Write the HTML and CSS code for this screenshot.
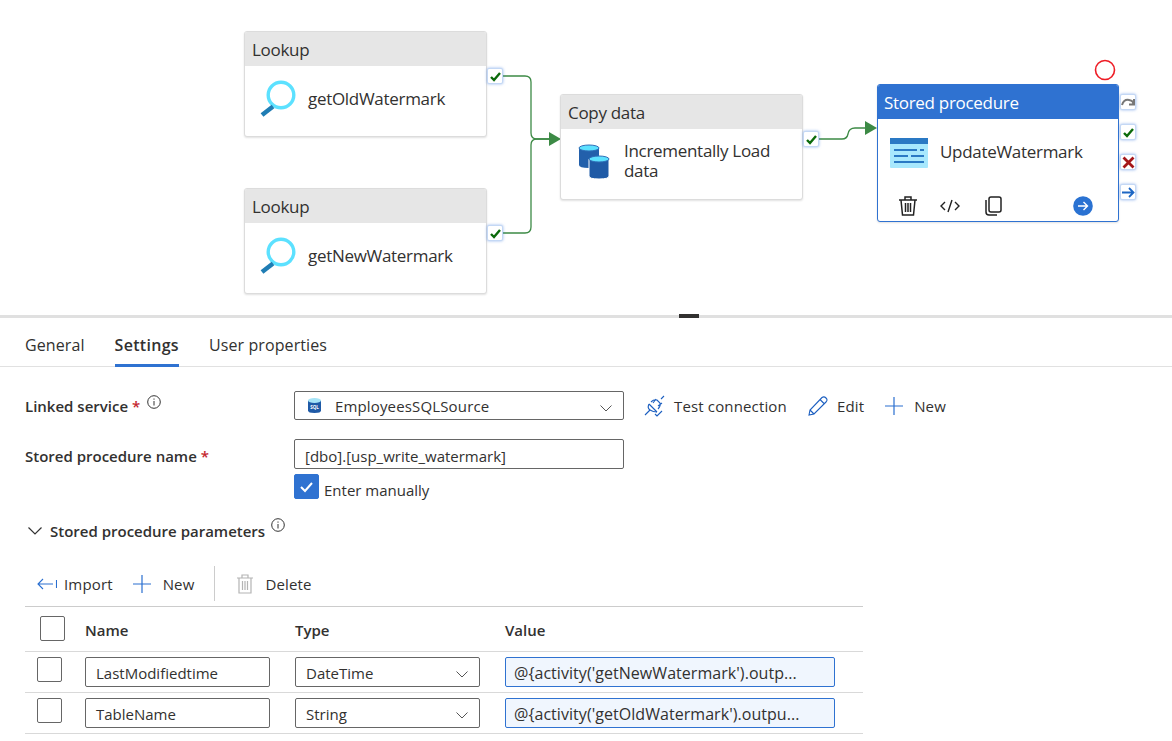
FILE: index.html
```html
<!DOCTYPE html>
<html lang="en">
<head>
	<meta charset="UTF-8">
	<title>Stored procedure settings</title>
	<link rel="stylesheet" href="styles.css">
</head>
<body>
	<!-- pipeline canvas -->
	<div class="canvas">
		<svg class="wires" width="1172" height="315" viewBox="0 0 1172 315">
			<path class="wire" d="M503 76H525q6 0 6 6V133q0 6 6 6H551"/>
			<path class="wire" d="M503 233H525q6 0 6-6V145q0-6 6-6H551"/>
			<path class="wire" d="M819 139H842q5 0 6-5q1-6 7-6H867"/>
			<path class="head" d="M549 132L561 139L549 146Z"/>
			<path class="head" d="M865 121L877 128L865 135Z"/>
			<circle class="ring" cx="1105" cy="70" r="9.5"/>
		</svg>

		<div class="node lookup1">
			<div class="node-head">Lookup</div>
			<div class="node-body">
				<svg class="node-icon" width="40" height="40" viewBox="0 0 40 40"><circle cx="21" cy="16" r="12.8" fill="none" stroke="#5ce1ff" stroke-width="3.4"/><path d="M2 36L13 27.500" stroke="#1f7db4" stroke-width="4.500"/></svg>
				<span>getOldWatermark</span>
			</div>
		</div>
		<div class="tick t1"><svg width="13" height="13" viewBox="0 0 13 13"><path class="ok" d="M2 7L5 10L11 3"/></svg></div>

		<div class="node lookup2">
			<div class="node-head">Lookup</div>
			<div class="node-body">
				<svg class="node-icon" width="40" height="40" viewBox="0 0 40 40"><circle cx="21" cy="16" r="12.8" fill="none" stroke="#5ce1ff" stroke-width="3.4"/><path d="M2 36L13 27.500" stroke="#1f7db4" stroke-width="4.500"/></svg>
				<span>getNewWatermark</span>
			</div>
		</div>
		<div class="tick t2"><svg width="13" height="13" viewBox="0 0 13 13"><path class="ok" d="M2 7L5 10L11 3"/></svg></div>

		<div class="node copy">
			<div class="node-head">Copy data</div>
			<div class="node-body">
				<svg class="node-icon" width="40" height="40" viewBox="0 0 40 40">
					<path d="M1 7V24q0 3 10 3t10-3V7Z" fill="#2360ab"/>
					<ellipse cx="11" cy="7" rx="10" ry="3" fill="#5ce1ff" stroke="#2f6fb8"/>
					<path d="M11 18V35q0 3 10 3t10-3V18Z" fill="#1f5aa6" stroke="#fff"/>
					<ellipse cx="21" cy="18" rx="10" ry="3" fill="#5ce1ff" stroke="#2f6fb8"/>
				</svg>
				<span>Incrementally Load<br>data</span>
			</div>
		</div>
		<div class="tick t3"><svg width="13" height="13" viewBox="0 0 13 13"><path class="ok" d="M2 7L5 10L11 3"/></svg></div>

		<div class="node stored">
			<div class="node-head">Stored procedure</div>
			<div class="node-body">
				<svg class="proc-icon" width="38" height="30" viewBox="0 0 38 30">
					<rect width="38" height="30" rx="1" fill="#a8e8fd"/>
					<rect width="38" height="6" fill="#2a79c4"/>
					<path d="M4 12H27M30 12H34M4 18H18M21 18H34M4 24H34" stroke="#2a79c4" stroke-width="1.800"/>
				</svg>
				<span>UpdateWatermark</span>
			</div>
			<div class="node-actions">
				<svg width="20" height="22" viewBox="0 0 20 22" fill="none" stroke="#222" stroke-width="1.500"><path d="M1 5H19M7 5V2H13V5M3 5L4.500 20H15.500L17 5M7.500 8V17M10 8V17M12.500 8V17"/></svg>
				<svg class="code" width="20" height="14" viewBox="0 0 20 14" fill="none" stroke="#222" stroke-width="1.400"><path d="M5 3L1 7L5 11M15 3L19 7L15 11M12 1L8 13"/></svg>
				<svg class="dup" width="18" height="20" viewBox="0 0 18 20" fill="none" stroke="#222" stroke-width="1.500"><rect x="5" y="1" width="12" height="15" rx="2"/><path d="M2 4V16q0 3 3 3H13"/></svg>
				<svg class="go" width="20" height="20" viewBox="0 0 20 20"><circle cx="10" cy="10" r="9.800" fill="#2a72d2"/><path d="M5 10H14.500M10.500 6L14.500 10L10.500 14" fill="none" stroke="#fff" stroke-width="1.400"/></svg>
			</div>
		</div>
		<div class="tick s1"><svg width="14" height="13" viewBox="0 0 14 13" fill="none" stroke="#777" stroke-width="2"><path d="M1 9Q3 3 8 4T12 8M13 3V8.500H8"/></svg></div>
		<div class="tick s2"><svg width="13" height="13" viewBox="0 0 13 13"><path class="ok" d="M2 7L5 10L11 3"/></svg></div>
		<div class="tick s3"><svg width="13" height="13" viewBox="0 0 13 13" fill="none" stroke="#a4161a" stroke-width="2.800"><path d="M1.500 1.500L11.500 11.500M11.500 1.500L1.500 11.500"/></svg></div>
		<div class="tick s4"><svg width="13" height="13" viewBox="0 0 13 13" fill="none" stroke="#1c66c4" stroke-width="1.800"><path d="M0 6.500H11.500M7 2L11.500 6.500L7 11"/></svg></div>
	</div>

	<div class="splitter"><span class="grip"></span></div>

	<div class="tabs">
		<a class="tab">General</a>
		<a class="tab active">Settings</a>
		<a class="tab">User properties</a>
	</div>

	<div class="form">
		<div class="form-row first">
			<label class="label">Linked service <em>*</em><svg class="info" width="14" height="14" viewBox="0 0 14 14"><circle cx="7" cy="7" r="6.300" fill="none" stroke="#333"/><path d="M7 6V10.500M7 3.500V4.700" stroke="#333"/></svg></label>
			<div class="field select linked">
				<svg width="13" height="15" viewBox="0 0 13 15"><path d="M0 2.500V12.500Q0 15 6.500 15T13 12.500V2.500Z" fill="#1f5aa6"/><ellipse cx="6.500" cy="2.500" rx="6.500" ry="2.500" fill="#a6e4f7"/><text x="6.500" y="10.500" class="sql">SQL</text></svg>
				<span>EmployeesSQLSource</span>
				<svg class="chev" width="12" height="7" viewBox="0 0 12 7" fill="none" stroke="#555"><path d="M.5 .5L6 6L11.500 .5"/></svg>
			</div>
			<div class="commands">
				<a class="cmd"><svg width="22" height="22" viewBox="0 0 22 22" fill="none" stroke="#1c5fc0" stroke-width="1.100"><path d="M1 20L6 15M5 9L13 17M7 7Q10 4 13 5L16 8Q17 11 14 14M9 8L12 4M14 11L18 8M17 4L20 1M11 19L13 21L18 16"/><path d="M5 9Q3 13 6 15T13 17"/></svg>Test connection</a>
				<a class="cmd"><svg width="22" height="22" viewBox="0 0 22 22" fill="none" stroke="#1c5fc0" stroke-width="1.100"><path d="M2 20L3 15L15 2.500Q17 1 19 3T19 7L7 19ZM3 15L7 19M13 4.500L17.500 9"/></svg>Edit</a>
				<a class="cmd"><svg class="plus" width="20" height="20" viewBox="0 0 20 20"><path d="M10 1V19M1 10H19" stroke="#2a6fd0" stroke-width="1.200"/></svg>New</a>
			</div>
		</div>

		<div class="form-row second">
			<label class="label">Stored procedure name <em>*</em></label>
			<div class="field proc">[dbo].[usp_write_watermark]</div>
		</div>
		<div class="manual">
			<span class="check on"><svg width="15" height="12" viewBox="0 0 15 12" fill="none" stroke="#fff" stroke-width="2"><path d="M2 6L6 10L13 2"/></svg></span>
			<span>Enter manually</span>
		</div>

		<div class="section">
			<svg width="14" height="8" viewBox="0 0 14 8" fill="none" stroke="#333" stroke-width="1.200"><path d="M.5 .5L7 7L13.500 .5"/></svg>
			<b>Stored procedure parameters</b>
			<svg class="info up" width="14" height="14" viewBox="0 0 14 14"><circle cx="7" cy="7" r="6.300" fill="none" stroke="#333"/><path d="M7 6V10.500M7 3.500V4.700" stroke="#333"/></svg>
		</div>

		<div class="toolbar">
			<a class="cmd"><svg width="20" height="12" viewBox="0 0 20 12" fill="none" stroke="#2a6fd0" stroke-width="1.100"><path d="M1 6H16M6 1L1 6L6 11M19.500 2V10"/></svg>Import</a>
			<a class="cmd"><svg class="plus" width="20" height="20" viewBox="0 0 20 20"><path d="M10 1V19M1 10H19" stroke="#2a6fd0" stroke-width="1.200"/></svg>New</a>
			<span class="sep"></span>
			<a class="cmd off"><svg width="16" height="20" viewBox="0 0 16 20" fill="none" stroke="#b4b4b4" stroke-width="1.200"><path d="M0 4H16M5 4V1H11V4M2 4V19H14V4M5.500 7V16M8 7V16M10.500 7V16"/></svg>Delete</a>
		</div>

		<div class="params">
			<div class="row head-row">
				<span class="check hd"></span>
				<b>Name</b>
				<b>Type</b>
				<b>Value</b>
			</div>
			<div class="row">
				<span class="check"></span>
				<div class="field cell">LastModifiedtime</div>
				<div class="field cell select"><span>DateTime</span><svg class="chev" width="12" height="7" viewBox="0 0 12 7" fill="none" stroke="#555"><path d="M.5 .5L6 6L11.500 .5"/></svg></div>
				<div class="field expr">@{activity('getNewWatermark').outp...</div>
			</div>
			<div class="row">
				<span class="check"></span>
				<div class="field cell">TableName</div>
				<div class="field cell select"><span>String</span><svg class="chev" width="12" height="7" viewBox="0 0 12 7" fill="none" stroke="#555"><path d="M.5 .5L6 6L11.500 .5"/></svg></div>
				<div class="field expr">@{activity('getOldWatermark').outpu...</div>
			</div>
		</div>
	</div>
</body>
</html>
```

FILE: styles.css
```css
*{box-sizing:border-box;}
body{
	margin:0;
	background:#fff;
	color:#323130;
	font-family:"Open Sans","Noto Sans","Liberation Sans",sans-serif;
	font-size:15px;
	overflow:hidden;
}

/* canvas */
.canvas{position:relative;height:315px;letter-spacing:-0.3px;}
.wires{position:absolute;left:0;top:0;}
.wire{fill:none;stroke:#3c8a45;stroke-width:1.300;}
.head{fill:#3c8a45;}
.ring{fill:none;stroke:#ee1c25;stroke-width:1.600;}
.node{
	position:absolute;
	width:243px;
	height:106px;
	border:1px solid #dcdcdc;
	border-radius:3px;
	box-shadow:0 1px 2px rgba(0,0,0,.12);
	background:#fff;
	overflow:hidden;
}
.lookup1{left:244px;top:31px;}
.lookup2{left:244px;top:188px;}
.copy{left:560px;top:94px;}
.stored{left:877px;top:84px;width:242px;height:138px;border-color:#2f72d1;}
.node-head{
	height:34px;
	padding-left:7px;
	background:#e6e6e6;
	font-size:17px;
	line-height:36px;
}
.stored .node-head{padding-left:6px;background:#2f72d1;color:#fff;}
.node-body{
	display:flex;
	align-items:center;
	gap:8px;
	padding:11px 0 0 15px;
	font-size:17px;
	line-height:20px;
}
.lookup1 .node-body,.lookup2 .node-body{padding-top:13px;}
.copy .node-body{gap:6px;padding:12px 0 0 17px;align-items:flex-start;}
.stored .node-body{gap:12px;padding:16px 0 0 12px;}
.proc-icon{margin-top:3px;}
.node-actions{
	display:flex;
	align-items:center;
	gap:22px;
	padding:27px 0 0 20px;
}
.node-actions .dup{margin-left:2px;}
.node-actions .go{margin-left:49px;}
.tick{
	position:absolute;
	display:flex;
	align-items:center;
	justify-content:center;
	width:16px;
	height:16px;
	background:#fff;
	border:1px solid #c4d8f5;
	border-radius:2px;
	box-shadow:0 0 3px rgba(60,120,220,.55);
}
.ok{fill:none;stroke:#0b6a0b;stroke-width:2.400;}
.t1{left:487px;top:68px;}
.t2{left:487px;top:225px;}
.t3{left:803px;top:131px;}
.s1{left:1120px;top:94px;}
.s2{left:1120px;top:124px;}
.s3{left:1120px;top:154px;}
.s4{left:1120px;top:184px;}

.splitter{position:relative;height:3px;background:#e0e0e0;}
.grip{position:absolute;left:679px;top:-1px;width:20px;height:4px;background:#323130;}

/* tabs */
.tabs{
	display:flex;
	gap:30px;
	height:49px;
	padding-left:25px;
	border-bottom:1px solid #e1e1e1;
	letter-spacing:.1px;
}
.tab{
	height:47px;
	padding:16px 0 0;
	font-size:16px;
	line-height:22px;
}
.tab.active{
	font-weight:600;
	border-bottom:3px solid #2f72d1;
	height:49px;
	letter-spacing:.3px;
}

/* form */
.form{padding-left:25px;}
.form-row{display:flex;align-items:center;}
.first{margin-top:24px;}
.second{margin-top:19px;}
.label{width:269px;font-weight:600;}
.second .label{padding-top:4px;}
.label em{font-style:normal;color:#c4262e;}
.info{vertical-align:3px;margin-left:7px;}
.field{
	height:30px;
	padding:0 10px;
	border:1px solid #666;
	border-radius:2px;
	line-height:30px;
	background:#fff;
}
.linked,.proc{width:330px;}
.proc{line-height:32px;}
.linked{height:29px;padding-left:13px;}
.sql{font-size:4.500px;font-weight:700;fill:#fff;text-anchor:middle;letter-spacing:0;}
.select{display:flex;align-items:center;}
.select .chev{margin:5px 1px 0 auto;}
.select span{padding-top:1px;}
.linked span{margin-left:14px;letter-spacing:.15px;}
.commands{display:flex;align-items:center;gap:20px;margin-left:20px;}
.cmd{display:flex;align-items:center;gap:8px;letter-spacing:.15px;}
.cmd .plus{margin-right:2px;}
.manual{display:flex;align-items:flex-end;gap:5px;margin:5px 0 0 269px;height:25px;}
.manual span:last-child{margin-bottom:-1px;}
.check{
	display:flex;
	align-items:center;
	justify-content:center;
	flex:none;
	width:25px;
	height:25px;
	border:1px solid #666;
	border-radius:2px;
}
.check.on{background:#2f72d1;border-color:#2f72d1;}
.section{display:flex;align-items:center;gap:8px;margin:22px 0 0 3px;height:20px;}
.section b{font-weight:600;}
.up{margin:-12px 0 0 -2px;}
.toolbar{
	display:flex;
	align-items:center;
	height:35px;
	margin:25px 0 0 12px;
}
.toolbar .cmd{gap:7px;}
.toolbar .cmd:nth-child(2){margin-left:19px;gap:9px;}
.sep{width:1px;height:35px;margin:0 22px 0 20px;background:#ccc;}
.toolbar .off{gap:12px;}

/* parameters table */
.params{width:838px;margin-top:5px;border-top:1px solid #ccc;}
.row{
	display:grid;
	grid-template-columns:48px 210px 210px 330px;
	align-items:start;
	height:41px;
	padding:5px 0 0 12px;
	border-bottom:1px solid #d9d9d9;
}
.head-row{height:45px;padding-top:9px;}
.head-row b{font-weight:600;margin-top:4px;}
.hd{margin-left:3px;}
.cell{width:185px;}
.expr{
	border-color:#2f72d1;
	background:#f0f6fe;
	padding:0 0 0 8px;
	font-size:16px;
	font-weight:500;
	letter-spacing:.05px;
	white-space:nowrap;
	overflow:hidden;
}
```
